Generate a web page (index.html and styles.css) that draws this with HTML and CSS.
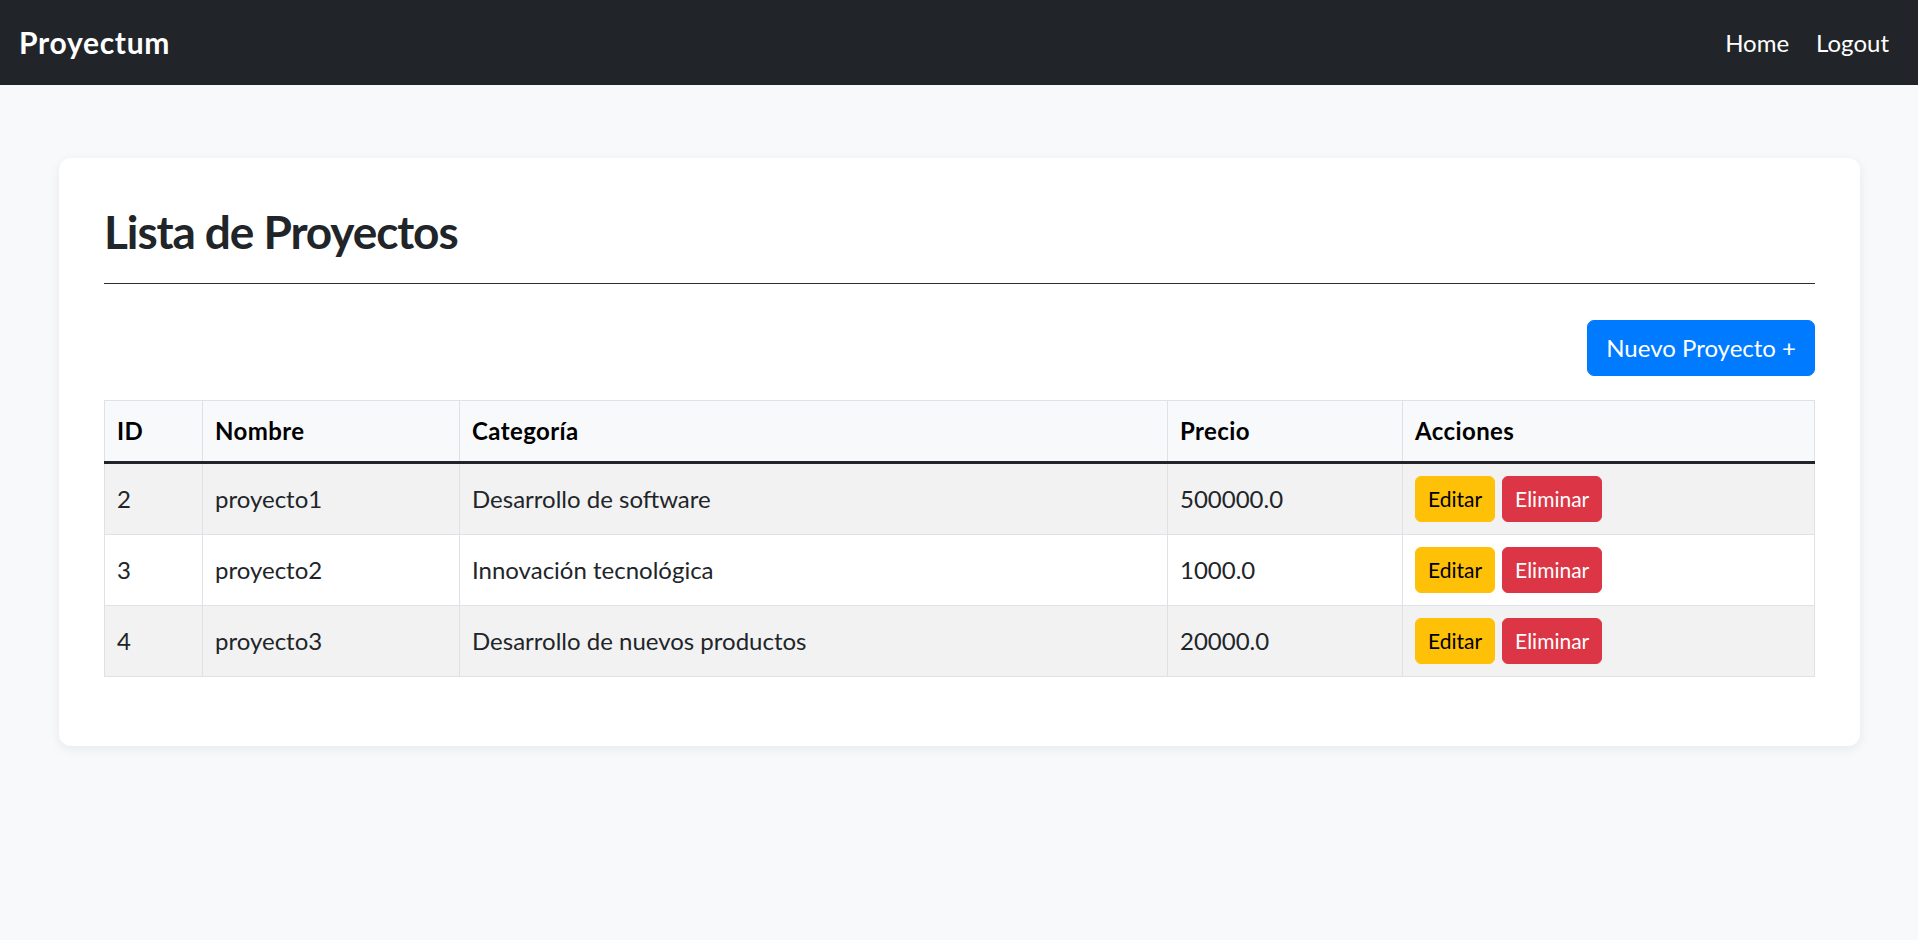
FILE: index.html
```html
<!DOCTYPE html>
<html lang="es">
<head>
<meta charset="utf-8">
<title>Proyectum</title>
<link rel="stylesheet" href="styles.css">
</head>
<body>
<nav class="navbar">
  <a class="brand" href="#">Proyectum</a>
  <div class="nav-links">
    <a class="nav-link" href="#">Home</a>
    <a class="nav-link" href="#">Logout</a>
  </div>
</nav>
<main class="page">
  <section class="card">
    <h2 class="title">Lista de Proyectos</h2>
    <hr class="divider">
    <div class="toolbar">
      <a class="btn btn-primary" href="#">Nuevo Proyecto +</a>
    </div>
    <table class="table">
      <colgroup>
        <col class="c-id">
        <col class="c-nombre">
        <col class="c-cat">
        <col class="c-precio">
        <col class="c-acc">
      </colgroup>
      <thead>
        <tr>
          <th>ID</th>
          <th>Nombre</th>
          <th>Categoría</th>
          <th>Precio</th>
          <th>Acciones</th>
        </tr>
      </thead>
      <tbody>
        <tr class="striped">
          <td>2</td>
          <td>proyecto1</td>
          <td>Desarrollo de software</td>
          <td>500000.0</td>
          <td><div class="actions"><a class="btn-sm btn-warning" href="#">Editar</a><a class="btn-sm btn-danger" href="#">Eliminar</a></div></td>
        </tr>
        <tr>
          <td>3</td>
          <td>proyecto2</td>
          <td>Innovación tecnológica</td>
          <td>1000.0</td>
          <td><div class="actions"><a class="btn-sm btn-warning" href="#">Editar</a><a class="btn-sm btn-danger" href="#">Eliminar</a></div></td>
        </tr>
        <tr class="striped">
          <td>4</td>
          <td>proyecto3</td>
          <td>Desarrollo de nuevos productos</td>
          <td>20000.0</td>
          <td><div class="actions"><a class="btn-sm btn-warning" href="#">Editar</a><a class="btn-sm btn-danger" href="#">Eliminar</a></div></td>
        </tr>
      </tbody>
    </table>
  </section>
</main>
</body>
</html>
```

FILE: styles.css
```css
* { box-sizing: border-box; }

html, body {
  margin: 0;
  padding: 0;
}

body {
  background: #f8f9fa;
  color: #212529;
  font-family: "Segoe UI", Lato, "Open Sans", sans-serif;
  font-size: 24px;
  line-height: 1.5;
  min-height: 940px;
}

a { text-decoration: none; }

.navbar {
  height: 85px;
  background: #212529;
  display: flex;
  align-items: center;
  justify-content: space-between;
  padding: 0 29px 0 19px;
}

.brand {
  color: #fff;
  font-weight: 700;
  font-size: 30px;
  line-height: 45px;
  letter-spacing: 0.7px;
}

.nav-links {
  display: flex;
  gap: 27px;
}

.nav-link {
  color: #fff;
  font-size: 24px;
  line-height: 36px;
}

.page {
  padding: 73px 58px 0 59px;
}

.card {
  background: #fff;
  border-radius: 12px;
  padding: 45px;
  box-shadow: 0 3px 12px rgba(0, 0, 0, 0.07);
}

.title {
  margin: 0;
  font-size: 46px;
  line-height: 58px;
  font-weight: 700;
  letter-spacing: -1.1px;
  color: #212529;
}

.divider {
  margin: 22px 0 0;
  border: 0;
  border-top: 1px solid #2b2f33;
  height: 0;
}

.toolbar {
  margin-top: 36px;
  display: flex;
  justify-content: flex-end;
}

.btn {
  display: inline-block;
  font-size: 24px;
  line-height: 36px;
  padding: 9px 18px;
  border: 1px solid transparent;
  border-radius: 7px;
  height: 56px;
}

.btn-primary {
  background: #007bff;
  border-color: #007bff;
  color: #fff;
}

.table {
  margin: 24px 0 24px;
  width: 100%;
  border-collapse: collapse;
  table-layout: fixed;
}

.c-id { width: 98px; }
.c-nombre { width: 257px; }
.c-cat { width: 708px; }
.c-precio { width: 235px; }
.c-acc { width: 412px; }

.table th,
.table td {
  border: 1px solid #dee2e6;
  padding: 12px;
  text-align: left;
  vertical-align: middle;
  line-height: 36px;
}

.table thead th {
  background: #f8f9fa;
  color: #000;
  font-weight: 700;
  letter-spacing: 0.4px;
  border-bottom: 3px solid #212529;
}

.table tbody tr.striped td {
  background: #f2f2f2;
}

.table tbody td {
  height: 70px;
}

.actions {
  display: flex;
  gap: 7px;
}

.btn-sm {
  display: inline-block;
  font-size: 21px;
  line-height: 32px;
  padding: 6px 12px;
  border: 1px solid transparent;
  border-radius: 6px;
}

.btn-warning {
  background: #ffc107;
  border-color: #ffc107;
  color: #000;
}

.btn-danger {
  background: #dc3545;
  border-color: #dc3545;
  color: #fff;
}
```
